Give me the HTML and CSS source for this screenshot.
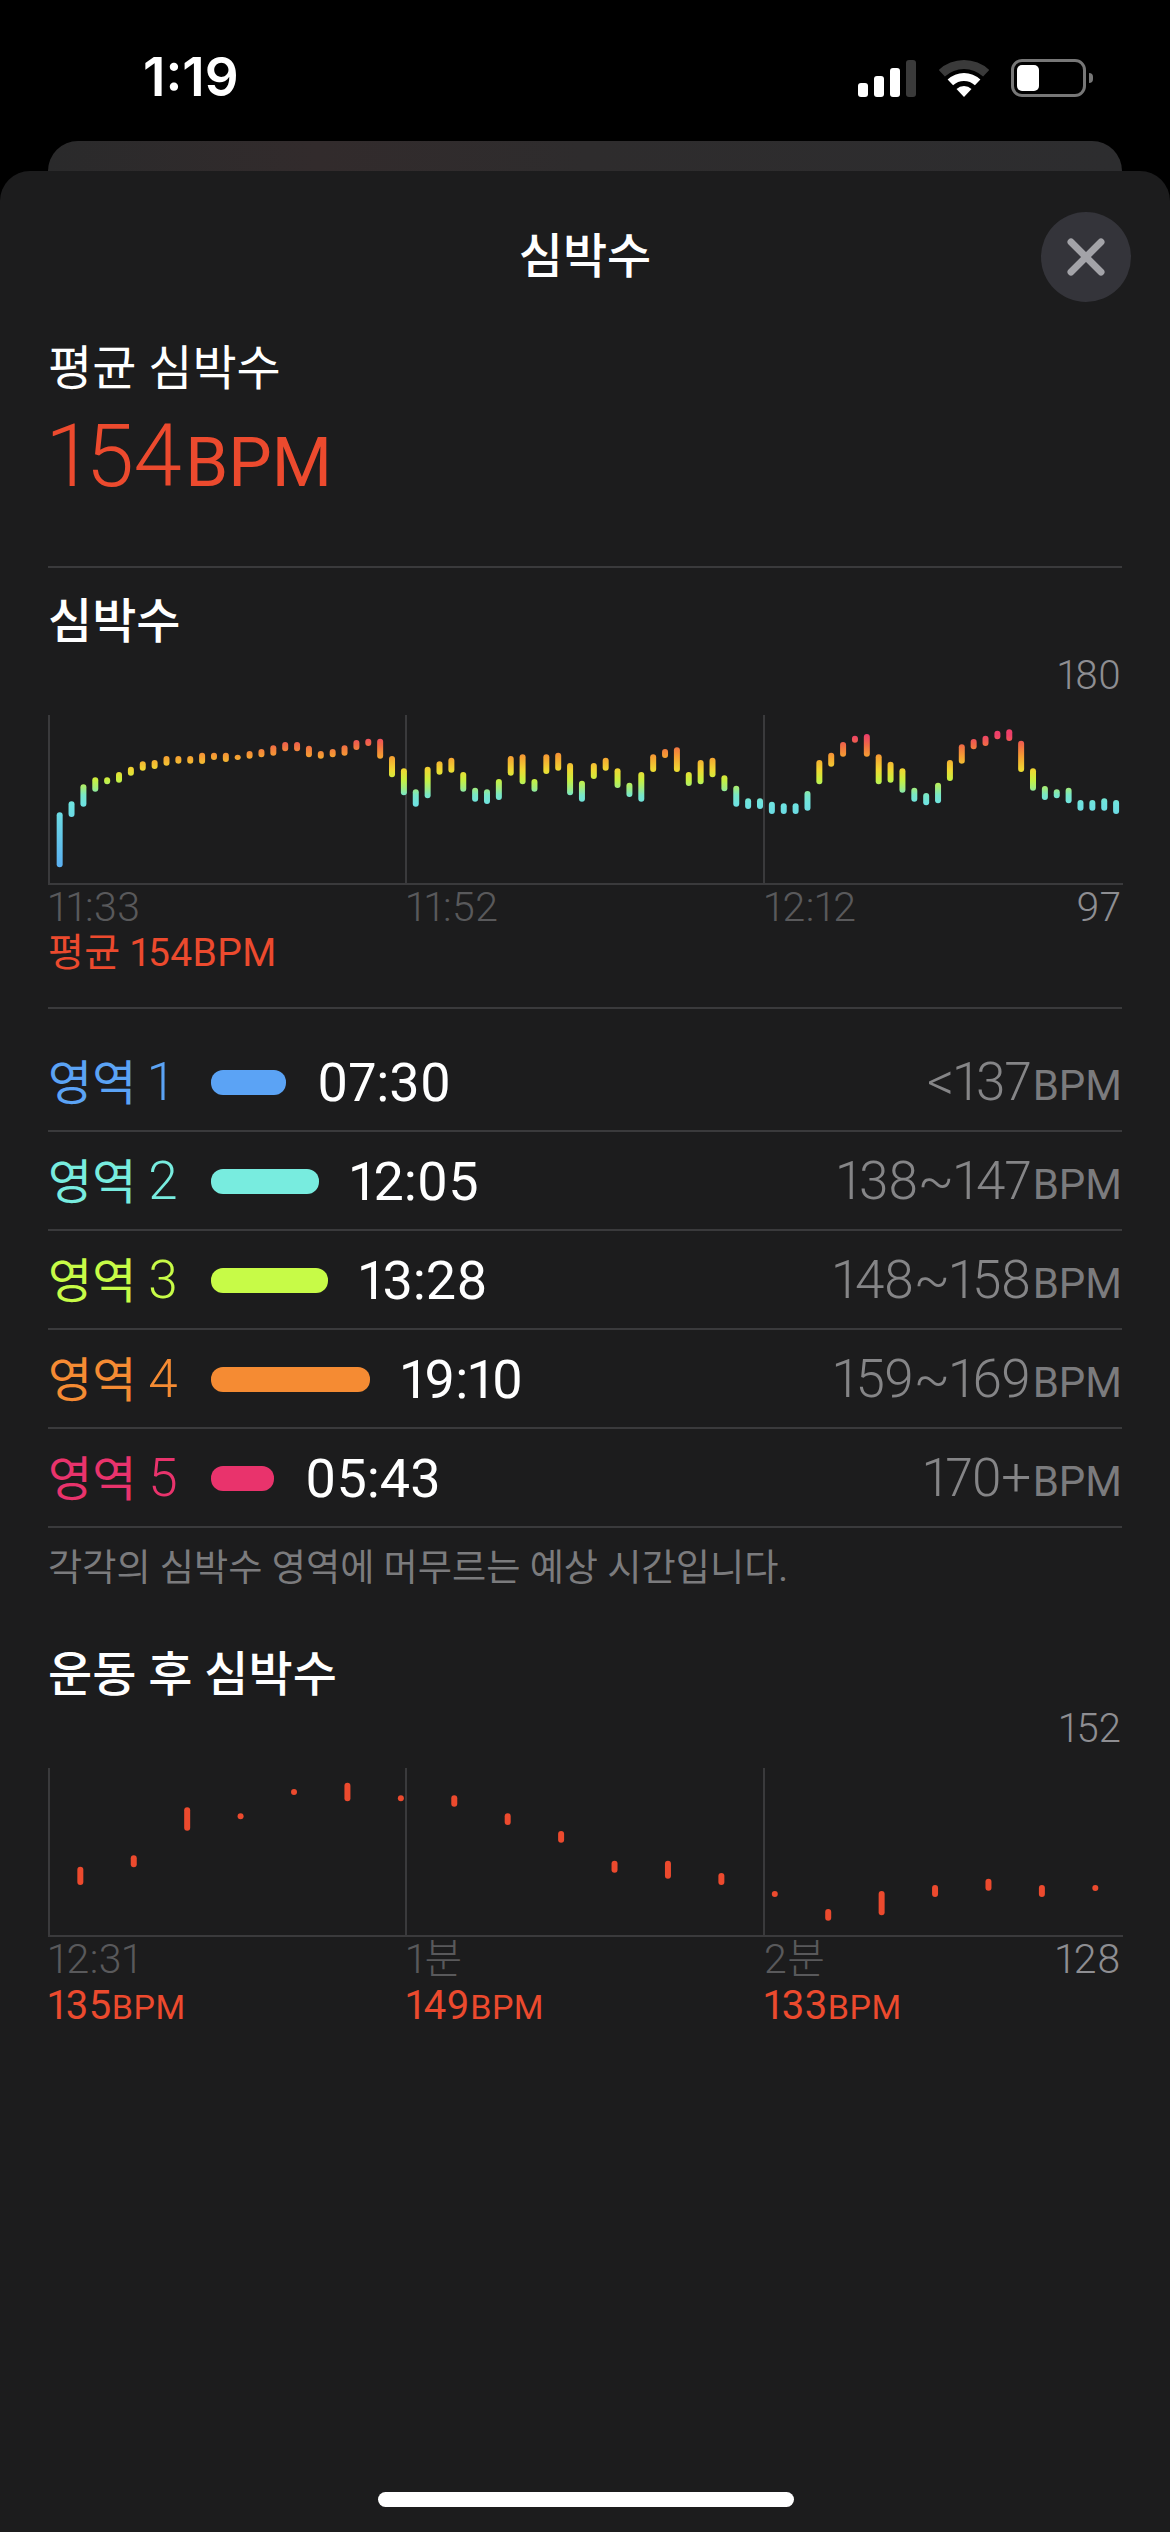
FILE: index.html
```html
<!DOCTYPE html>
<html lang="ko">
<head>
  <meta charset="UTF-8">
  <meta name="viewport" content="width=device-width, initial-scale=1.0">
  <title>심박수</title>
  <link rel="stylesheet" href="styles.css">
</head>
<body>
  <div class="status-bar">
    <span class="status-time">1:19</span>
    <div class="status-icons">
      <div class="signal">
        <span class="signal-bar signal-1"></span>
        <span class="signal-bar signal-2"></span>
        <span class="signal-bar signal-3"></span>
        <span class="signal-bar signal-4"></span>
      </div>
      <svg class="wifi" viewBox="0 0 50 37">
        <path fill="#3a3a3a" d="M-.2 9.95A37 37 0 0 1 50.2 9.95L44.1 16.5A28 28 0 0 0 5.9 16.5Z"/>
        <path fill="#fff" d="M8.6 19.5A24 24 0 0 1 41.4 19.5L35.9 25.3A16 16 0 0 0 14.1 25.3Z"/>
        <path fill="#fff" d="M17.5 29A11 11 0 0 1 32.5 29L25 37Z"/>
      </svg>
      <div class="battery">
        <div class="battery-body"><span class="battery-level"></span></div>
        <span class="battery-nub"></span>
      </div>
    </div>
  </div>

  <div class="back-card"></div>

  <main class="sheet">
    <header class="sheet-header">
      <h1>심박수</h1>
      <button class="close-btn" type="button" aria-label="닫기">
        <svg viewBox="0 0 38 38"><path d="M4 4L34 34M34 4L4 34"/></svg>
      </button>
    </header>

    <section class="summary">
      <div class="summary-label">평균 심박수</div>
      <div class="summary-value">154<span class="summary-unit">BPM</span></div>
    </section>

    <section class="hr-section">
      <h2>심박수</h2>
      <div class="y-max">180</div>
      <div class="chart chart-zone">
        <div class="chart-col"></div>
        <div class="chart-col"></div>
        <div class="chart-col"></div>
        <svg class="chart-bars" id="zoneChart" viewBox="0 0 3225 504" preserveAspectRatio="none">
          <defs>
            <linearGradient id="zoneGradient" gradientUnits="userSpaceOnUse" x1="0" y1="60" x2="0" y2="455">
              <stop offset="0" stop-color="#ee3f6a"/>
              <stop offset="0.076" stop-color="#f06a45"/>
              <stop offset="0.165" stop-color="#f5a032"/>
              <stop offset="0.266" stop-color="#efd832"/>
              <stop offset="0.342" stop-color="#c8f040"/>
              <stop offset="0.405" stop-color="#a0ec80"/>
              <stop offset="0.456" stop-color="#78e6c8"/>
              <stop offset="0.52" stop-color="#6fe3e0"/>
              <stop offset="1" stop-color="#5bb0f2"/>
            </linearGradient>
          </defs>
        </svg>
      </div>
      <div class="x-labels">
        <span>11:33</span>
        <span>11:52</span>
        <span>12:12</span>
        <span class="y-min">97</span>
      </div>
      <div class="avg-line">평균 154BPM</div>
    </section>

    <ul class="zones">
      <li class="zone zone-1">
        <span class="zone-name">영역 <b>1</b></span>
        <span class="zone-pill pill-1"></span>
        <span class="zone-time">07:30</span>
        <span class="zone-range">&lt;137<small>BPM</small></span>
      </li>
      <li class="zone zone-2">
        <span class="zone-name">영역 <b>2</b></span>
        <span class="zone-pill pill-2"></span>
        <span class="zone-time">12:05</span>
        <span class="zone-range">138~147<small>BPM</small></span>
      </li>
      <li class="zone zone-3">
        <span class="zone-name">영역 <b>3</b></span>
        <span class="zone-pill pill-3"></span>
        <span class="zone-time">13:28</span>
        <span class="zone-range">148~158<small>BPM</small></span>
      </li>
      <li class="zone zone-4">
        <span class="zone-name">영역 <b>4</b></span>
        <span class="zone-pill pill-4"></span>
        <span class="zone-time">19:10</span>
        <span class="zone-range">159~169<small>BPM</small></span>
      </li>
      <li class="zone zone-5">
        <span class="zone-name">영역 <b>5</b></span>
        <span class="zone-pill pill-5"></span>
        <span class="zone-time">05:43</span>
        <span class="zone-range">170+<small>BPM</small></span>
      </li>
    </ul>
    <p class="note">각각의 심박수 영역에 머무르는 예상 시간입니다.</p>

    <section class="recovery">
      <h2>운동 후 심박수</h2>
      <div class="y-max">152</div>
      <div class="chart chart-recovery">
        <div class="chart-col"></div>
        <div class="chart-col"></div>
        <div class="chart-col"></div>
        <svg class="chart-bars" id="recoveryChart" viewBox="0 0 3225 501" preserveAspectRatio="none"></svg>
      </div>
      <div class="x-labels">
        <span>12:31</span>
        <span>1분</span>
        <span>2분</span>
        <span class="y-min">128</span>
      </div>
      <div class="recovery-values">
        <span>135<small>BPM</small></span>
        <span>149<small>BPM</small></span>
        <span>133<small>BPM</small></span>
      </div>
    </section>

    <div class="home-indicator"></div>
  </main>

  <script src="chart.js"></script>
</body>
</html>
```

FILE: styles.css
```css
:root {
  --sheet-color: #1c1c1d;
  --line-color: #3a3a3c;
  --red-color: #ec4a2e;
  --muted-color: #7b7b7d;
  --axis-color: #8e8e92;
  --faint-color: #59595b;
}

* {
  box-sizing: border-box;
  margin: 0;
  padding: 0;
}

html, body {
  width: 1170px;
  height: 2532px;
  overflow: hidden;
}

body {
  background-color: #000;
  color: #fff;
  font-family: Roboto, "Noto Sans CJK KR", sans-serif;
  font-variant-numeric: proportional-nums;
}

/* status bar */
.status-bar {
  height: 141px;
  display: flex;
  justify-content: space-between;
  align-items: flex-start;
  padding: 49px 77px 0 143px;
}

.status-time {
  font-family: Inter, sans-serif;
  font-size: 53px;
  line-height: 56px;
  font-weight: 600;
}

.status-icons {
  display: flex;
  align-items: flex-end;
  padding-top: 10px;
}

.signal {
  display: flex;
  align-items: flex-end;
  gap: 6px;
  height: 37px;
}

.signal-bar {
  width: 10px;
  border-radius: 3px;
  background-color: #fff;
}

.signal-1 { height: 14px; }
.signal-2 { height: 21px; }
.signal-3 { height: 29px; }
.signal-4 { height: 37px; background-color: #3a3a3a; }

.wifi {
  width: 50px;
  height: 37px;
  margin-left: 23px;
}

.battery {
  display: flex;
  align-items: center;
  margin-left: 22px;
}

.battery-body {
  width: 75px;
  height: 38px;
  border: 3px solid #777;
  border-radius: 11px;
  padding: 3px;
}

.battery-level {
  display: block;
  width: 22px;
  height: 26px;
  border-radius: 5px;
  background-color: #fff;
}

.battery-nub {
  width: 4px;
  height: 10px;
  margin-left: 3px;
  border-radius: 0 4px 4px 0;
  background-color: #777;
}

.back-card {
  height: 30px;
  margin: 0 48px;
  border-radius: 30px 30px 0 0;
  background: linear-gradient(90deg, #2a2a2b 0%, #322b2c 25%, #2e2c2d 50%, #2d2d2f 100%);
}

/* sheet */
.sheet {
  position: relative;
  height: 2361px;
  padding: 0 48px;
  border-radius: 30px 30px 0 0;
  background-color: var(--sheet-color);
}

.sheet-header {
  display: grid;
  grid-template-columns: 1fr auto 1fr;
  align-items: center;
  padding-top: 41px;
  margin: 0 -9px;
}

h1 {
  grid-column: 2;
  font-size: 48px;
  line-height: 90px;
  font-weight: 500;
}

.close-btn {
  grid-column: 3;
  justify-self: end;
  width: 90px;
  height: 90px;
  display: flex;
  align-items: center;
  justify-content: center;
  border: none;
  border-radius: 50%;
  background-color: #34343a;
}

.close-btn svg {
  width: 38px;
  height: 38px;
  fill: none;
  stroke: #a3a3a8;
  stroke-width: 7;
  stroke-linecap: round;
}

.summary {
  padding-top: 38px;
  height: 266px;
  border-bottom: 2px solid var(--line-color);
}

.summary-label {
  font-size: 48px;
  line-height: 58px;
}

.summary-value {
  margin-top: 13px;
  font-size: 87px;
  line-height: 90px;
  font-weight: 300;
  letter-spacing: -0.5px;
  color: var(--red-color);
}

.summary-unit {
  margin-left: 4px;
  font-size: 69px;
  font-weight: 400;
  letter-spacing: 0;
}

h2 {
  font-size: 48px;
  line-height: 60px;
  font-weight: 500;
}

.hr-section {
  padding-top: 24px;
  height: 441px;
  border-bottom: 2px solid var(--line-color);
}

.y-max {
  margin: 1px 1px 0 0;
  font-size: 40px;
  line-height: 46px;
  font-weight: 300;
  text-align: right;
  color: var(--axis-color);
}

.chart {
  position: relative;
  display: grid;
  grid-template-columns: 357px 358px 1fr;
  width: 1075px;
  margin-top: 16px;
  border-bottom: 2px solid var(--line-color);
}

.chart-zone {
  height: 170px;
}

.chart-recovery {
  height: 169px;
}

.chart-col {
  border-left: 2px solid var(--line-color);
}

.chart-bars {
  position: absolute;
  top: 0;
  left: 0;
  width: 1075px;
  height: 100%;
  overflow: visible;
}

.x-labels {
  display: grid;
  grid-template-columns: 358px 358px 1fr auto;
  margin-top: -1px;
  padding-right: 1px;
  font-size: 41px;
  line-height: 46px;
  font-weight: 300;
  letter-spacing: 0.5px;
  color: var(--faint-color);
}

.y-min {
  color: var(--axis-color);
}

.avg-line {
  margin-top: -1px;
  font-size: 39px;
  line-height: 48px;
  letter-spacing: 0.4px;
  color: var(--red-color);
}

/* zones */
.zones {
  list-style-type: none;
  padding-top: 24px;
}

.zone {
  display: flex;
  align-items: center;
  height: 99px;
  padding-top: 2px;
  border-bottom: 2px solid var(--line-color);
}

.zone-name {
  min-width: 163px;
  font-size: 48px;
  line-height: 60px;
}

.zone-name b {
  font-size: 53px;
  font-weight: 300;
}

.zone-1 .zone-name { color: #5ba3f5; }
.zone-2 .zone-name { color: #78ecdf; }
.zone-3 .zone-name { color: #c7fb47; }
.zone-4 .zone-name { color: #f58b33; }
.zone-5 .zone-name { color: #e9336c; }

.zone-pill {
  height: 25px;
  border-radius: 12px;
}

.pill-1 { width: 75px; background-color: #5ba3f5; }
.pill-2 { width: 108px; background-color: #78ecdf; }
.pill-3 { width: 117px; background-color: #c7fb47; }
.pill-4 { width: 159px; background-color: #f58b33; }
.pill-5 { width: 63px; background-color: #e9336c; }

.zone-time {
  margin-left: 31px;
  font-size: 54px;
  line-height: 60px;
}

.zone-range {
  margin: 2px 0 0 auto;
  font-size: 53px;
  line-height: 60px;
  font-weight: 300;
  letter-spacing: -0.6px;
  color: #858587;
}

.zone-range small {
  margin-left: 2px;
  font-size: 42px;
  font-weight: 400;
  letter-spacing: 0;
  color: var(--muted-color);
}

.note {
  padding-top: 16px;
  font-size: 37.2px;
  line-height: 48px;
  color: var(--muted-color);
}

/* recovery */
.recovery {
  padding-top: 53px;
}

.recovery-values {
  display: grid;
  grid-template-columns: 358px 358px 1fr;
  margin-top: 1px;
  font-size: 40px;
  line-height: 46px;
  letter-spacing: 0.5px;
  color: var(--red-color);
}

.recovery-values small {
  font-size: 34px;
}

.home-indicator {
  position: absolute;
  left: 378px;
  bottom: 25px;
  width: 416px;
  height: 15px;
  border-radius: 8px;
  background-color: #fff;
}
```

FILE: chart.js
```js
// tops and bottoms of the bars, in viewBox units (3 per screen pixel)
const zoneBars = [
  [517,682],[484,531],[433,500],[412,455],[412,433],[396,428],[380,407],[364,392],[360,387],[348,377],
  [348,371],[348,371],[338,372],[338,360],[338,366],[344,360],[333,356],[327,352],[316,347],[306,334],
  [306,334],[317,352],[333,356],[327,352],[316,347],[300,330],[296,318],[296,356],[348,412],[385,466],
  [448,500],[380,475],[364,404],[353,398],[396,455],[443,485],[448,492],[417,480],[348,407],[343,433],
  [417,455],[343,402],[338,392],[369,466],[422,485],[369,417],[353,392],[385,444],[428,471],[396,485],
  [343,396],[327,354],[322,396],[396,438],[360,433],[353,412],[406,454],[437,500],[475,507],[475,507],
  [485,522],[490,522],[490,522],[453,512],[360,433],[338,380],[306,350],[287,308],[282,350],[343,433],
  [365,428],[385,458],[443,485],[459,496],[428,490],[360,423],[313,371],[297,328],[287,318],[272,298],
  [268,303],[302,396],[385,452],[438,480],[448,475],[443,490],[480,512],[480,512],[475,512],[480,522]
];

const recoveryBars = [
  [680,735],[646,682],[502,572],[520,538],[447,465],[428,484],[466,484],[466,500],[520,555],[573,608],
  [662,698],[662,716],[699,735],[753,771],[807,842],[753,826],[735,771],[716,752],[735,771],[735,753]
];

function drawBars(svgId, bars, startX, stepX, topY, fill) {
  const svg = document.getElementById(svgId);
  bars.forEach(function(bar, i) {
    const rect = document.createElementNS('http://www.w3.org/2000/svg', 'rect');
    rect.setAttribute('x', startX + i * stepX - 9);
    rect.setAttribute('y', bar[0] - topY);
    rect.setAttribute('width', 18);
    rect.setAttribute('height', bar[1] - bar[0]);
    rect.setAttribute('rx', 9);
    rect.setAttribute('fill', fill);
    svg.appendChild(rect);
  });
}

drawBars('zoneChart', zoneBars, 35, 35.61, 225, 'url(#zoneGradient)');
drawBars('recoveryChart', recoveryBars, 97, 160.26, 384, '#ec4a2e');
```
